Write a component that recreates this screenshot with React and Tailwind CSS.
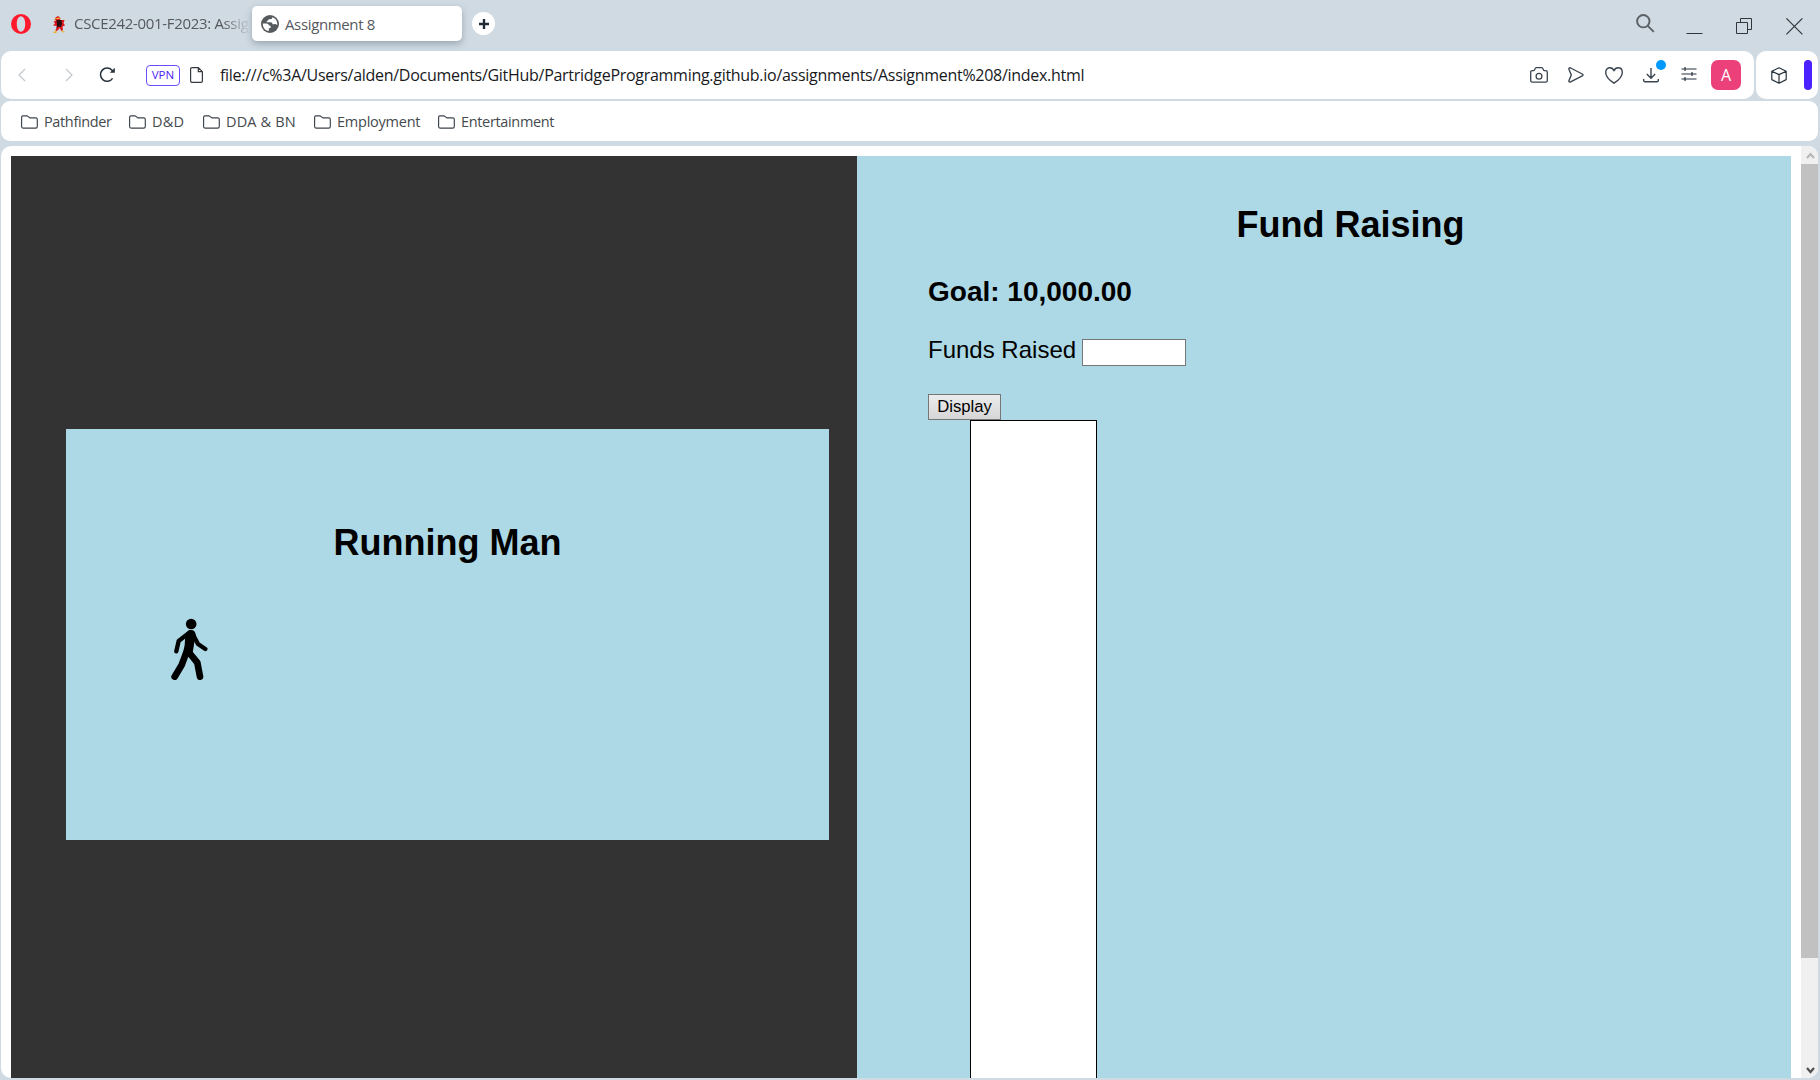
const bookmarks = [
  { name: "Pathfinder", space: "tracking-[-0.36px]", gap: "mr-[18px]", w: "w-[67px]" },
  { name: "D&D", space: "tracking-[0.25px]", gap: "mr-[18px]", w: "w-[33px]" },
  { name: "DDA & BN", space: "tracking-[0.15px]", gap: "mr-[18px]", w: "w-[70px]" },
  { name: "Employment", space: "tracking-[-0.24px]", gap: "mr-[17px]", w: "w-[84px]" },
  { name: "Entertainment", space: "tracking-[-0.34px]", gap: "mr-0", w: "w-[96px]" },
];

const Folder = () => (
  <svg className="mr-[6px] h-[14px] w-[17px] shrink-0" viewBox="0 0 17 14" fill="none" stroke="#3d434b" strokeWidth="1.15">
    <path d="M.6 2.3C.6 1.3 1.1.8 2 .8h4l3 2.1h5.7c1 0 1.6.5 1.6 1.5v7.1c0 1-.5 1.6-1.6 1.6H2c-.9 0-1.4-.5-1.4-1.5z" />
  </svg>
);

const Opera = () => (
  <svg className="h-5 w-5" viewBox="0 0 20 20">
    <path fillRule="evenodd" fill="#ff1b2d" d="M10 0a10 10 0 1 1 0 20 10 10 0 0 1 0-20zm0 2.3C7.2 2.3 5.8 6 5.8 10s1.400 7.700 4.200 7.700 4.200-3.700 4.200-7.700-1.400-7.700-4.200-7.700z" />
  </svg>
);

const Gamecock = () => (
  <svg className="h-[18px] w-3" viewBox="0 0 12 18">
    <path fill="#e8b21c" d="M3 2 1 3.500 3.500 4.500zM3 14.500l-3 2 2.500.7 1.500-1zM8 14l1.500 2.500 2.500-.6-2-.9zM9.500 4l2.200.3-1 1.500z" />
    <path fill="#dd1521" d="M2.500 1.500 5 0l2.500 2L7 4l4.500 0-1 3L12 9.500l-2.500 1L10 14l-2 1-1-3-3 3-1.500-.5L4 10 0 9.500 2 7.500.5 5.500 2.500 5z" />
    <path fill="#2b0b0c" d="M3.500 4h5l.5 4-1 3-2.500-.5-2 1.500L4 9z" />
    <path fill="#f4cf2c" d="M3.500 2 6.500 1.500l.5 1.300-4 .2z" />
  </svg>
);

const Globe = () => (
  <svg className="h-[18px] w-[18px]" viewBox="0 0 18 18">
    <circle cx="9" cy="9" r="9" fill="#565a5d" />
    <path d="M1.800 8.500h3.700c1.300 0 2.300.8 2.400 2 1.200 0 2 .5 1.900 1.500-.1.900-.8 1.300-2 1.300v2.800C4.300 15.600 1.800 12.900 1.800 8.500zM11.300 2.200c-.1 1.300-.6 2-2 2H7.700c-.3 1.200-.8 1.600-1.900 1.700v1.300h3.900c1.200.1 1.700.9 1.800 2 1.200.3 1.900-.4 3-.1l1.700 1c.5-3.600-1.200-6.700-4.900-7.900z" fill="#fff" />
  </svg>
);

function TabStrip() {
  return (
    <div className="flex h-[51px] shrink-0 items-start pl-[11px] text-[15px] leading-5 text-[#55595d]">
      <div className="mt-[14px]"><Opera /></div>
      <div className="mt-[16px] ml-[22px]"><Gamecock /></div>
      <div className="mt-[13px] ml-[9px] w-[176px] whitespace-nowrap tracking-[-0.32px] [mask-image:linear-gradient(to_right,black_148px,transparent_177px)]">CSCE242-001-F2023: Assig</div>
      <div className="mt-[6px] ml-[2px] flex h-[35px] w-[210px] items-center rounded-[5px] bg-white pl-[9px] shadow-[0_3px_7px_rgba(70,90,110,0.4)]">
        <Globe />
        <span className="ml-[6px] tracking-[-0.36px]">Assignment 8</span>
      </div>
      <div className="mt-[12px] ml-[10px] flex h-[23px] w-[23px] items-center justify-center rounded-full bg-white">
        <svg className="h-[10px] w-[10px]" viewBox="0 0 10 10" stroke="#1e2b36" strokeWidth="2.400"><path d="M5 0v10M0 5h10" /></svg>
      </div>
      <svg className="mt-[14px] ml-auto h-[19px] w-[19px]" viewBox="0 0 19 19" fill="none" stroke="#5a6065" strokeWidth="1.900"><circle cx="7.300" cy="7.200" r="6.200" /><path d="m11.800 11.800 6 6" /></svg>
      <svg className="mt-[18px] ml-[31px] h-[17px] w-[17px]" viewBox="0 0 17 17" stroke="#30363b" strokeWidth="1"><path d="M.5 15.500h16" /></svg>
      <svg className="mt-[18px] ml-[33px] h-[17px] w-[17px]" viewBox="0 0 17 17" fill="none" stroke="#30363b" strokeWidth="1"><path d="M.5 4.500h11v11H.5zM4.500 4.500v-4h11v11h-4" /></svg>
      <svg className="mt-[18px] mr-[17px] ml-[33px] h-[17px] w-[17px]" viewBox="0 0 17 17" stroke="#30363b" strokeWidth="1.200"><path d="m.4.400 16 16M16.400.400l-16 16" /></svg>
    </div>
  );
}

function AddressBar() {
  return (
    <div className="mx-px flex h-12 shrink-0 gap-[2px] pr-px">
      <div className="flex min-w-0 flex-1 items-center rounded-[10px] bg-white pl-[17px]">
        <svg className="h-[14px] w-2" viewBox="0 0 8 14" fill="none" stroke="#c3c7ca" strokeWidth="1.200"><path d="M7 1 1 7l6 6" /></svg>
        <svg className="ml-[39px] h-[14px] w-2" viewBox="0 0 8 14" fill="none" stroke="#c3c7ca" strokeWidth="1.200"><path d="m1 1 6 6-6 6" /></svg>
        <svg className="ml-[26px] h-[16px] w-[17px]" viewBox="0 0 17 16" fill="none" stroke="#26323c" strokeWidth="1.500"><path d="M13.600 11.300A6.600 6.600 0 1 1 13 3.200l1 1.300" /><path d="M15.800.8v5h-5z" fill="#26323c" stroke="none" /></svg>
        <div className="ml-[30px] flex h-[21px] w-[34px] items-center justify-center rounded-[4px] border border-[#6b4dfa] text-[11.500px] tracking-[0.1px] text-[#4f25f5]">VPN</div>
        <svg className="ml-[10px] h-4 w-[13px]" viewBox="0 0 13 16" fill="none" stroke="#33393f" strokeWidth="1.200"><path d="M8.300.6H2C1 .6.600 1 .6 2v12c0 1 .4 1.400 1.400 1.400h9c1 0 1.400-.4 1.400-1.400V4.700zM8.300.6v4.100h4.100" /></svg>
        <span className="ml-[17px] whitespace-nowrap text-[16px] leading-6 tracking-[-0.285px] text-[#17191c]">file:///c%3A/Users/alden/Documents/GitHub/PartridgeProgramming.github.io/assignments/Assignment%208/index.html</span>
        <svg className="mr-[20px] ml-auto h-4 w-[18px]" viewBox="0 0 18 16" fill="none" stroke="#3b4550" strokeWidth="1.300"><path d="M.7 5.200c0-1 .6-1.600 1.600-1.600h1.500c1.200 0 .9-2.900 2.400-2.900h5.600c1.500 0 1.200 2.900 2.400 2.900h1.500c1 0 1.600.6 1.600 1.600v8.200c0 1.100-.6 1.700-1.600 1.700H2.300c-1 0-1.600-.6-1.600-1.700z" /><circle cx="9" cy="9.200" r="2.900" /></svg>
        <svg className="mr-[21px] h-4 w-4" viewBox="0 0 16 16" fill="none" stroke="#3b4550" strokeWidth="1.400" strokeLinejoin="round"><path d="M2.600 1 14.300 7c1 .6 1 1.300 0 1.800L2.600 14.900c-1.200.5-2-.2-1.600-1.400L3.300 8 1 2.400C.600 1.200 1.400.500 2.600 1z" /></svg>
        <svg className="mr-[20px] h-[17px] w-[18px]" viewBox="0 0 18 17" fill="none" stroke="#3b4550" strokeWidth="1.400" strokeLinejoin="round"><path d="M9 16.200C4.500 13.300.7 10 .7 5.500.7 2.600 2.600.8 4.900.8 6.800.8 8.300 2 9 3.800 9.700 2 11.200.8 13.100.8c2.300 0 4.200 1.800 4.200 4.700 0 4.500-3.800 7.800-8.300 10.700z" /></svg>
        <div className="relative mr-[22px] h-4 w-4">
          <svg className="h-4 w-4" viewBox="0 0 16 16" fill="none" stroke="#3b4550" strokeWidth="1.400"><path d="M8 1v10M3.800 7 8 11.200 12.200 7M.7 12v1.500c0 .8.400 1.200 1.200 1.200h12.200c.8 0 1.200-.4 1.200-1.200V12" /></svg>
          <span className="absolute -top-[7px] left-[13px] h-[10px] w-[10px] rounded-full bg-[#0099ff]" />
        </div>
        <svg className="-mt-[2px] mr-[14px] h-[14px] w-4" viewBox="0 0 16 14" stroke="#26323c" strokeWidth="1.200"><path d="M.500 2h15M.500 7h15M.500 12h15M4 0v4M11 5v4M4 10v4" /></svg>
        <div className="mr-[13px] flex h-[30px] w-[30px] items-center justify-center rounded-[7px] bg-[#ec407a] text-[16px] font-normal text-white">A</div>
      </div>
      <div className="flex w-[62px] items-center rounded-[10px] bg-white pl-[15px]">
        <svg className="mt-[1px] h-[17px] w-4" viewBox="0 0 16 17" fill="none" stroke="#26323c" strokeWidth="1.200" strokeLinejoin="round"><path d="m8 .8 7.200 3.400v8.400L8 16.200.8 12.600V4.200zM.8 4.200 8 7.600l7.200-3.400M8 7.600v8.600" /></svg>
        <div className="ml-[17px] h-[30px] w-2 rounded-full bg-[#4b22ff]" />
      </div>
    </div>
  );
}

function BookmarkBar() {
  return (
    <div className="mx-px mt-[2px] mr-[2px] flex h-10 shrink-0 items-center rounded-[9px] bg-white pt-px pl-[20px] text-[14.500px] leading-5 text-[#454a4e]">
      {bookmarks.map((b) => (
        <div key={b.name} className={"flex items-center " + b.gap}>
          <Folder />
          <span className={"whitespace-nowrap " + b.space + " " + b.w}>{b.name}</span>
        </div>
      ))}
    </div>
  );
}

const WalkingMan = () => (
  <svg className="mt-[55px] ml-[104px] h-[62px] w-[38px]" viewBox="0 0 114 186" fill="none" stroke="#000" strokeLinecap="round" strokeLinejoin="round">
    <circle cx="63.500" cy="18" r="16" fill="#000" stroke="none" />
    <path d="M59 43 26 69l-7 31M67 46l17 32 22 15" strokeWidth="13" />
    <path d="M48 106 35 141 14 176M56 102l26 32 8 42" strokeWidth="20" />
    <path d="M46 50c5-17 29-20 31-1l-6 37-5 31H36l8-35z" fill="#000" stroke="none" />
  </svg>
);

function Page() {
  return (
    <div className="mx-px mt-[5px] mr-[2px] mb-[2px] flex min-h-0 flex-1 overflow-hidden rounded-[10px] bg-white font-['Liberation_Sans',Arial,sans-serif] text-black">
      <main className="mt-[10px] ml-[10px] flex w-[1780px] shrink-0">
        <section className="w-[846px] bg-[#333333] pt-[273px] pl-[55px]">
          <div className="h-[411px] w-[763px] bg-[#add8e6] pt-[94px]">
            <h1 className="text-center text-[36px] leading-10 font-bold">Running Man</h1>
            <WalkingMan />
          </div>
        </section>
        <section className="flex w-[934px] flex-col items-start bg-[#add8e6] pt-[49px] pr-[18px] pl-[71px]">
          <h1 className="self-stretch text-center text-[36px] leading-10 font-bold">Fund Raising</h1>
          <h2 className="mt-[31px] text-[28px] leading-8 font-bold">Goal: 10,000.00</h2>
          <div className="mt-[28px] flex h-[30px] items-start">
            <label htmlFor="funds" className="w-[154px] text-[24px] leading-7">Funds Raised</label>
            <input id="funds" className="mt-[3px] h-[27px] w-[104px] border border-[#767676] bg-white" />
          </div>
          <button className="mt-[28px] flex h-[26px] w-[73px] shrink-0 items-center justify-center border border-[#767676] bg-linear-to-b from-[#ececec] to-[#d6d6d6] pb-[1px] text-[16.667px] leading-5">Display</button>
          <div className="ml-[42px] w-[127px] flex-1 border border-b-0 border-black bg-white" />
        </section>
      </main>
      <aside className="ml-auto flex w-[17px] flex-col bg-[#f0f0f0]">
        <svg className="h-[18px] w-[17px]" viewBox="0 0 17 18" fill="none" stroke="#b5b5b5" strokeWidth="2"><path d="m6 12 3.500-4 3.500 4" /></svg>
        <div className="h-[794px] bg-[#c1c1c1]" />
        <svg className="mt-auto h-[18px] w-[17px]" viewBox="0 0 17 18" fill="none" stroke="#505050" strokeWidth="2.200"><path d="m6 8 3.500 4L13 8" /></svg>
      </aside>
    </div>
  );
}

export default function App() {
  return (
    <div className="flex h-[1080px] w-[1820px] flex-col overflow-hidden bg-[#d0dae2] font-['Open_Sans','Noto_Sans',sans-serif]">
      <TabStrip />
      <AddressBar />
      <BookmarkBar />
      <Page />
    </div>
  );
}
